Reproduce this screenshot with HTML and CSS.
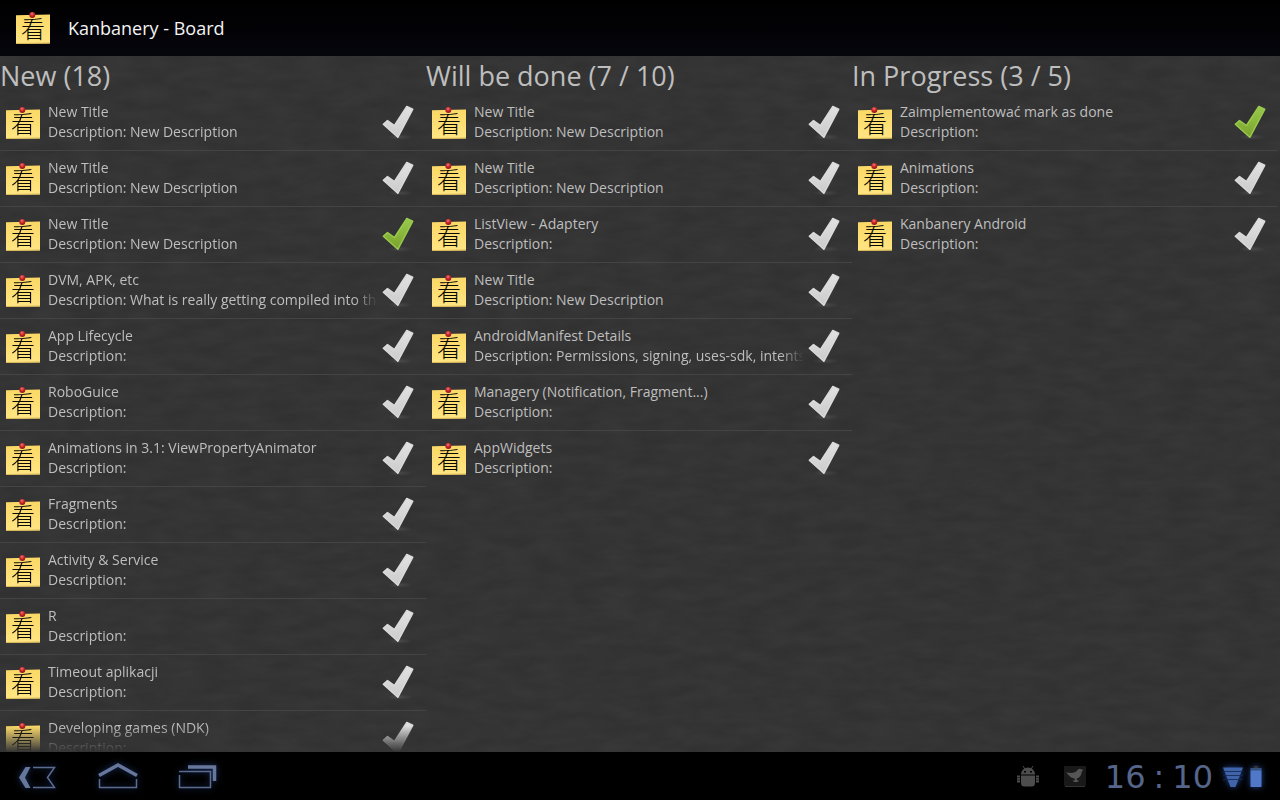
FILE: index.html
```html
<!DOCTYPE html>
<html lang="en">
<head>
<meta charset="utf-8">
<meta name="viewport" content="width=device-width, initial-scale=1">
<title>Kanbanery - Board</title>
<link rel="stylesheet" href="styles.css">
</head>
<body>
<svg class="defs" aria-hidden="true">
  <defs>
    <linearGradient id="paper" x1="0" y1="0" x2="0" y2="1"><stop offset="0" stop-color="#fbd866"/><stop offset="1" stop-color="#ffe583"/></linearGradient>
    <radialGradient id="pin" cx=".45" cy=".3" r=".7"><stop offset="0" stop-color="#ee7a74"/><stop offset=".5" stop-color="#c9242b"/><stop offset="1" stop-color="#8e1219"/></radialGradient>
    <linearGradient id="grey" x1="0" y1="0" x2="0" y2="1"><stop offset="0" stop-color="#e2e2e2"/><stop offset="1" stop-color="#cbcbcb"/></linearGradient>
    <linearGradient id="green" x1="0" y1="0" x2="0" y2="1"><stop offset="0" stop-color="#98c94c"/><stop offset="1" stop-color="#7ba22c"/></linearGradient>
    <radialGradient id="shade"><stop offset="0" stop-color="#fff" stop-opacity=".1"/><stop offset="1" stop-color="#fff" stop-opacity="0"/></radialGradient>
    <symbol id="note" viewBox="0 0 34 32">
      <path d="M0 3.2 34 2.4V31.4L0 32Z" fill="url(#paper)"/>
      <path d="M0 31.5 34 31" stroke="#d8b95a" fill="none"/>
      <text x="17" y="26" text-anchor="middle" class="glyph">看</text>
      <circle cx="16.3" cy="3" r="3" fill="url(#pin)"/>
    </symbol>
    <symbol id="tick" viewBox="0 0 32 36">
      <ellipse cx="18" cy="32" rx="13" ry="3" fill="url(#shade)" stroke="none"/>
      <path d="M1.300 19.300 5.500 15.600 12.500 20.500 24.800 1.500 30.700 4.300 15.800 32.300Z" stroke-width="1.500" stroke-linejoin="round"/>
    </symbol>
  </defs>
</svg>

<header class="appbar">
  <svg class="note" aria-hidden="true"><use href="#note"/></svg>
  <h1 class="appbar-title">Kanbanery - Board</h1>
</header>

<main class="board">
  <svg class="texture" aria-hidden="true">
    <filter id="grain" x="0" y="0" width="100%" height="100%">
      <feTurbulence type="fractalNoise" baseFrequency="0.03 0.09" numOctaves="3" seed="4"/>
      <feColorMatrix values="0 0 0 0 1  0 0 0 0 1  0 0 0 0 1  .05 0 0 0 -.01"/>
    </filter>
    <rect width="100%" height="100%" filter="url(#grain)"/>
  </svg>
</main>

<nav class="sysbar">
  <div class="sys-keys">
    <button class="key" aria-label="Back">
      <svg class="key-icon" viewBox="0 0 40 28"><path class="solid" d="M1 14.500 7.500 4H12.500L7 14.500 12.500 25H7.500Z"/><path class="line" d="M15 4.500H36.500L29.500 14.500 36.500 24.500H15"/></svg>
    </button>
    <button class="key" aria-label="Home">
      <svg class="key-icon" viewBox="0 0 40 28"><path class="thick" d="M1 12.500 20 2 39 12.500"/><path class="line" d="M1.500 16V24.500H38.500V16"/></svg>
    </button>
    <button class="key" aria-label="Recent apps">
      <svg class="key-icon" viewBox="0 0 40 28"><path class="thick" d="M10 4H36.500V18"/><path class="line" d="M1 8.500H32.500V24.500H1.500V12"/></svg>
    </button>
  </div>
  <div class="sys-status">
    <svg class="robot" viewBox="0 0 22 22" aria-label="Debugging"><g fill="#4d4d4d"><path d="M4 8.500A7 7 0 0 1 18 8.500ZM4 9.500H18V17Q18 20.500 14.500 20.500H7.500Q4 20.500 4 17Z"/><path d="M0 9.500H3V16.500H0ZM19 9.500H22V16.500H19Z"/></g><path d="M6 0 8 3M16 0 14 3" stroke="#4d4d4d"/><path d="M7 5h2v1.500H7zM13 5h2v1.500H13z" fill="#000"/><path d="M0 11.500H3M0 14H3M19 11.500H22M19 14H22" stroke="#000" stroke-width=".6"/></svg>
    <svg class="bird" viewBox="0 0 22 22" aria-label="Message"><rect width="22" height="20" rx="1" fill="#191919"/><path d="M1 20.500H21" stroke="#333"/><path d="M2 6.500 8 7 11.500 6 14 3.500Q16 2 17.500 3.500L19.500 3.700 17.800 5.500Q17.500 11 13 12.500L12.500 14 15 14.500 13.500 16H10L8.500 14.500H11L10.500 12.500 7 11.500 5 9.500Z" fill="#555"/></svg>
    <time class="clock"><span>16</span><span>:</span><span>10</span></time>
    <svg class="wifi" viewBox="0 0 20 22" aria-label="Wi-Fi"><path d="M0 1.500H20L12.500 21H7.500Z" fill="#4064aa"/><path d="M0 5.500H20M0 9.500H20M0 13.500H20" stroke="#14264c" stroke-width=".8"/></svg>
    <svg class="battery" viewBox="0 0 12 22" aria-label="Battery"><path d="M4 0H8V2H4Z" fill="#333"/><path d="M.5 2H11.500V5H.5Z" fill="#37517f"/><path d="M.5 4.500H11.500V21H.5Z" fill="#5078c8"/></svg>
  </div>
</nav>
<script src="board.js"></script>
</body>
</html>
```
FILE: styles.css
```css
* { box-sizing: border-box; }
body {
  margin: 0;
  height: 100vh;
  display: flex;
  flex-direction: column;
  background: #000;
  color: #bebebe;
  font-family: "Open Sans", "Noto Sans", sans-serif;
  overflow: hidden;
}
.defs { position: absolute; width: 0; height: 0; }
.glyph { font: 300 24px "Noto Sans CJK SC", sans-serif; fill: #0a0904; }

.appbar {
  flex: none;
  display: flex;
  align-items: center;
  gap: 18px;
  height: 56px;
  padding: 0 16px;
  background: linear-gradient(#000, #05050c);
}
.appbar-title { margin: 0; font-size: 18px; font-weight: 400; color: #f3f3f3; }
.note { flex: none; width: 34px; height: 32px; }

.board {
  position: relative;
  flex: 1;
  min-height: 0;
  display: grid;
  grid-template-columns: repeat(3, 1fr);
  padding-right: 2px;
  background: #313131;
}
.texture { position: absolute; inset: 0; width: 100%; height: 100%; }
.column { position: relative; min-width: 0; min-height: 0; display: flex; flex-direction: column; }
.column-title { margin: 0; height: 39px; line-height: 40px; font-size: 27px; font-weight: 400; white-space: nowrap; }
.cards { flex: 1; min-height: 0; margin: 0; padding: 0; list-style: none; overflow: hidden; }
.cards.long { mask-image: linear-gradient(#000 calc(100% - 26px), transparent); }
.card {
  display: flex;
  align-items: center;
  height: 56px;
  padding: 0 12px 0 6px;
  border-bottom: 1px solid #444;
}
.cards:not(.long) .card:last-child { border-bottom-color: transparent; }
.card-text {
  flex: 1;
  min-width: 0;
  padding: 0 4px 2px 8px;
  font-size: 14px;
  line-height: 20px;
  white-space: nowrap;
}
.card-text p { margin: 0; overflow: hidden; }
.card-text .faded { mask-image: linear-gradient(90deg, #000 calc(100% - 24px), transparent); }
.check { flex: none; display: block; height: 36px; position: relative; }
.check input { position: absolute; opacity: 0; margin: 0; }
.tick { display: block; width: 32px; height: 36px; fill: url(#grey); stroke: #dadada; }
.check input:checked + .tick { fill: url(#green); stroke: #98c94c; }

.sysbar {
  flex: none;
  display: flex;
  justify-content: space-between;
  align-items: center;
  height: 48px;
  padding: 2px 18px 0;
}
.sys-keys { display: flex; gap: 40px; }
.key { padding: 0; border: 0; background: none; }
.key-icon { display: block; width: 40px; height: 28px; overflow: visible; filter: drop-shadow(0 0 3px #1b3266); }
.solid { fill: #67779c; }
.line { fill: none; stroke: #5c6b90; stroke-width: 1.5; }
.thick { fill: none; stroke: #67779c; stroke-width: 3.5; }
.sys-status { display: flex; align-items: center; }
.robot, .bird { width: 22px; height: 22px; }
.robot { margin-right: 25px; }
.bird { margin-right: 19px; }
.clock { display: flex; gap: 8px; margin-right: 10px; font: 32px/40px "DejaVu Sans", sans-serif; color: #56658a; }
.wifi { width: 20px; height: 22px; margin-right: 7px; filter: drop-shadow(0 0 3px #24438c); }
.battery { width: 12px; height: 22px; filter: drop-shadow(0 0 3px #24438c); }
```
FILE: board.js
```js
const columns = [
  { title: "New (18)", cards: [
    ["New Title", "New Description"],
    ["New Title", "New Description"],
    ["New Title", "New Description", true],
    ["DVM, APK, etc", "What is really getting compiled into the"],
    ["App Lifecycle", ""],
    ["RoboGuice", ""],
    ["Animations in 3.1: ViewPropertyAnimator", ""],
    ["Fragments", ""],
    ["Activity & Service", ""],
    ["R", ""],
    ["Timeout aplikacji", ""],
    ["Developing games (NDK)", ""]
  ] },
  { title: "Will be done (7 / 10)", cards: [
    ["New Title", "New Description"],
    ["New Title", "New Description"],
    ["ListView - Adaptery", ""],
    ["New Title", "New Description"],
    ["AndroidManifest Details", "Permissions, signing, uses-sdk, intents,"],
    ["Managery (Notification, Fragment...)", ""],
    ["AppWidgets", ""]
  ] },
  { title: "In Progress (3 / 5)", cards: [
    ["Zaimplementować mark as done", "", true],
    ["Animations", ""],
    ["Kanbanery Android", ""]
  ] }
];

const escapeHtml = (s) => s.replace(/&/g, "&amp;");
const board = document.querySelector(".board");

columns.forEach((column) => {
  const section = document.createElement("section");
  section.className = "column";
  const cards = column.cards.map(([title, description, done]) => `
    <li class="card">
      <svg class="note" aria-hidden="true"><use href="#note"/></svg>
      <div class="card-text">
        <p>${escapeHtml(title)}</p>
        <p class="${description.length > 30 ? "faded" : ""}">Description: ${escapeHtml(description)}</p>
      </div>
      <label class="check">
        <input type="checkbox" aria-label="Mark as done"${done ? " checked" : ""}>
        <svg class="tick" aria-hidden="true"><use href="#tick"/></svg>
      </label>
    </li>`).join("");
  section.innerHTML = `<h2 class="column-title">${column.title}</h2>
    <ul class="cards${column.cards.length > 11 ? " long" : ""}">${cards}</ul>`;
  board.append(section);
});
```
